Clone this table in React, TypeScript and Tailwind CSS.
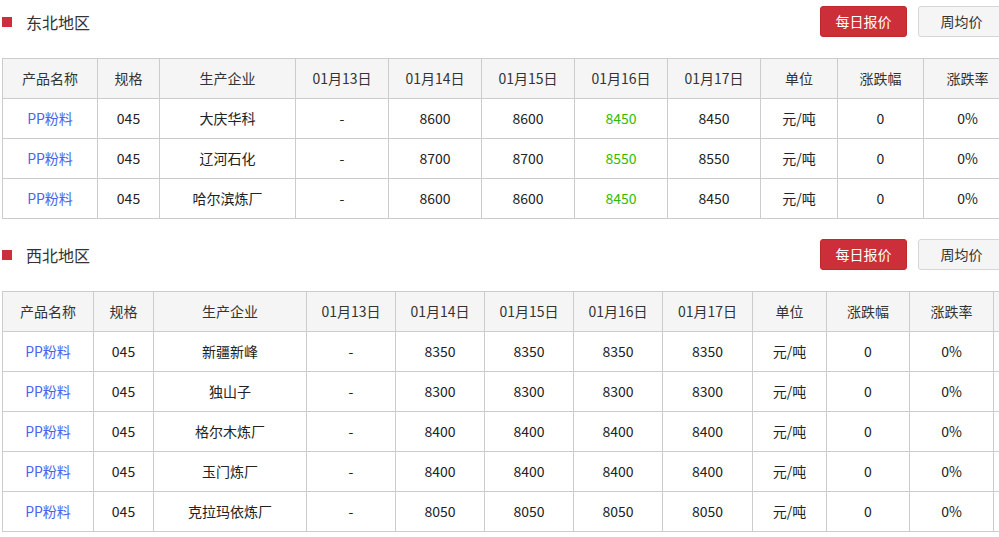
const font = { fontFamily: '"Noto Sans CJK SC", "Microsoft YaHei", sans-serif' };

type Row = { name: string; d13: string; d14: string; d15: string; d16: string; d17: string; green?: boolean };

const northeast: Row[] = [
  { name: '大庆华科', d13: '-', d14: '8600', d15: '8600', d16: '8450', d17: '8450', green: true },
  { name: '辽河石化', d13: '-', d14: '8700', d15: '8700', d16: '8550', d17: '8550', green: true },
  { name: '哈尔滨炼厂', d13: '-', d14: '8600', d15: '8600', d16: '8450', d17: '8450', green: true },
];

const northwest: Row[] = [
  { name: '新疆新峰', d13: '-', d14: '8350', d15: '8350', d16: '8350', d17: '8350' },
  { name: '独山子', d13: '-', d14: '8300', d15: '8300', d16: '8300', d17: '8300' },
  { name: '格尔木炼厂', d13: '-', d14: '8400', d15: '8400', d16: '8400', d17: '8400' },
  { name: '玉门炼厂', d13: '-', d14: '8400', d15: '8400', d16: '8400', d17: '8400' },
  { name: '克拉玛依炼厂', d13: '-', d14: '8050', d15: '8050', d16: '8050', d17: '8050' },
];

const headers = ['产品名称', '规格', '生产企业', '01月13日', '01月14日', '01月15日', '01月16日', '01月17日', '单位', '涨跌幅', '涨跌率'];

function SectionHeader({ title }: { title: string }) {
  return (
    <div className="flex items-center justify-between w-[1003px] h-[31px] mb-[21px]">
      <div className="flex items-center">
        <span className="w-[10px] h-[10px] bg-[#cc2f39] mr-[14px]" />
        <span className="text-[16px] text-[#333]">{title}</span>
      </div>
      <div className="flex gap-[11px]">
        <button className="w-[87px] h-[31px] rounded-[3px] bg-[#cc2f39] text-white text-[14px] border border-[#c0282f]">每日报价</button>
        <button className="w-[87px] h-[31px] rounded-[3px] bg-[#f5f5f5] text-[#333] text-[14px] border border-[#d6d6d6]">周均价</button>
      </div>
    </div>
  );
}

function PriceTable({ rows, widths, extra }: { rows: Row[]; widths: number[]; extra?: boolean }) {
  const cell = 'border border-[#cccccc] h-[40px] text-center text-[14px] p-0';
  return (
    <table className="table-fixed border-collapse" style={{ width: widths.reduce((a, b) => a + b, 0) }}>
      <colgroup>
        {widths.map((w, i) => (
          <col key={i} style={{ width: w }} />
        ))}
      </colgroup>
      <thead>
        <tr className="bg-[#f5f5f5] text-[#333]">
          {headers.map((h) => (
            <th key={h} className={`${cell} font-normal`}>{h}</th>
          ))}
          {extra && <th className={`${cell} font-normal`} />}
        </tr>
      </thead>
      <tbody>
        {rows.map((r) => (
          <tr key={r.name} className="text-[#222]">
            <td className={`${cell} text-[#4a63f0]`}>PP粉料</td>
            <td className={cell}>045</td>
            <td className={cell}>{r.name}</td>
            <td className={cell}>{r.d13}</td>
            <td className={cell}>{r.d14}</td>
            <td className={cell}>{r.d15}</td>
            <td className={`${cell} ${r.green ? 'text-[#33bb00]' : ''}`}>{r.d16}</td>
            <td className={cell}>{r.d17}</td>
            <td className={cell}>元/吨</td>
            <td className={cell}>0</td>
            <td className={cell}>0%</td>
            {extra && <td className={cell} />}
          </tr>
        ))}
      </tbody>
    </table>
  );
}

export default function App() {
  return (
    <div className="w-[999px] h-[537px] overflow-hidden bg-white" style={font}>
      <div className="w-[1060px] pl-[2px] pt-[6px]">
        <SectionHeader title="东北地区" />
        <PriceTable rows={northeast} widths={[95, 62, 136, 93, 93, 93, 93, 93, 77, 86, 88]} />
        <div className="mt-[20px]">
          <SectionHeader title="西北地区" />
          <PriceTable rows={northwest} widths={[91, 60, 153, 89, 89, 89, 89, 90, 74, 83, 84, 40]} extra />
        </div>
      </div>
    </div>
  );
}
